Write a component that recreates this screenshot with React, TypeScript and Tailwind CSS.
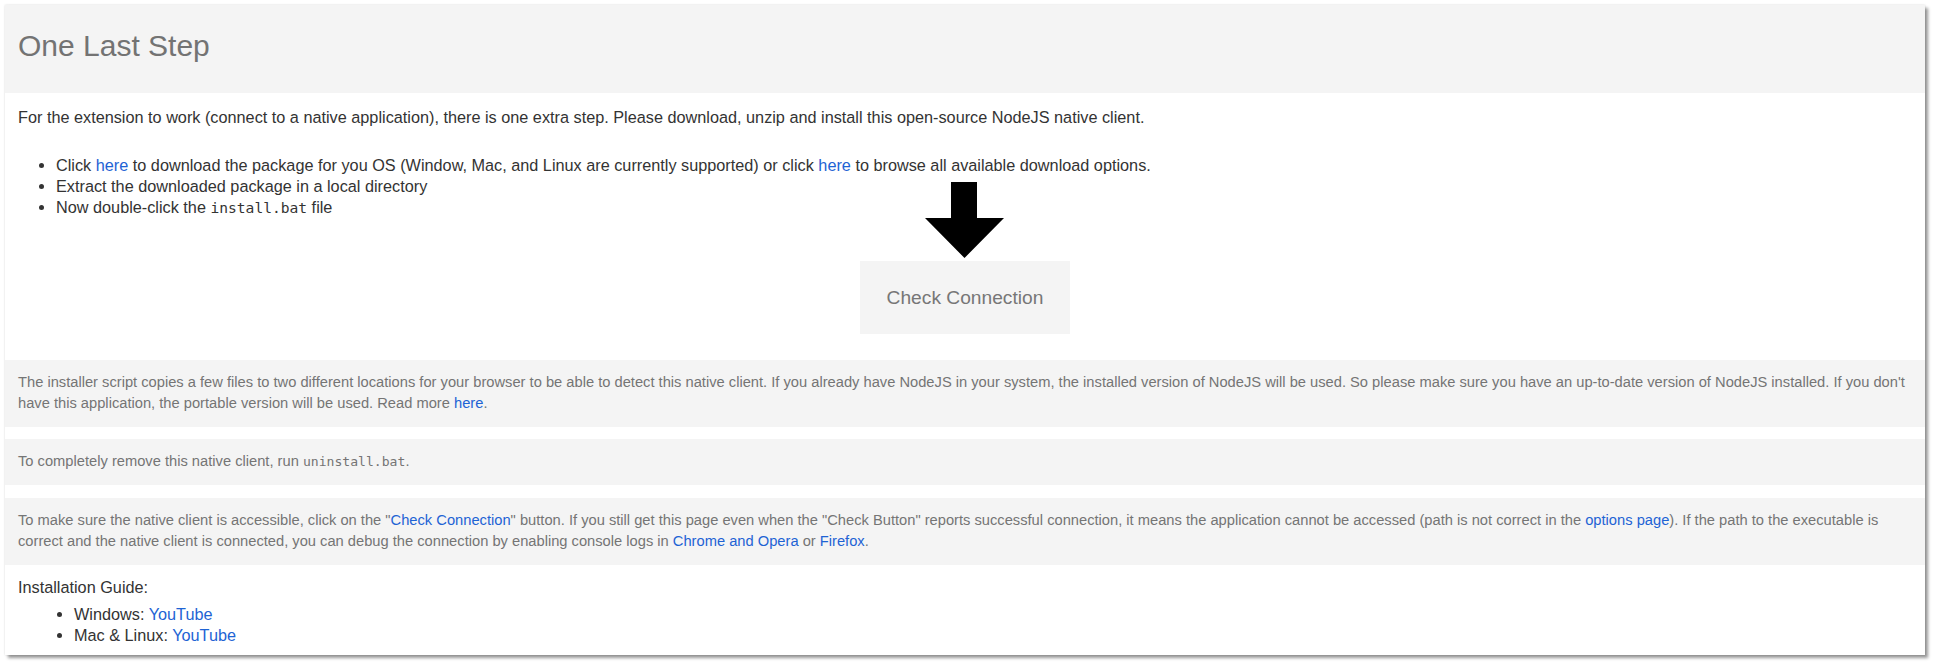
import React from 'react';

const LINK = "text-[#1e63d4] no-underline";

function Arrow() {
    return (
        <svg className="absolute left-[65px] top-[-79px]" width="80" height="77" viewBox="0 0 80 77">
            <polygon points="26,0 52,0 52,36 79,36 39.5,76 0,36 26,36" fill="#000" />
        </svg>
    );
}

export default function App() {
    return (
        <div className="min-h-[664px] bg-white pt-[5px] pl-[5px]">
            <div className="w-[1920px] bg-white font-['Liberation_Sans',Arial,sans-serif] shadow-[0_0_2px_rgba(0,0,0,0.15),3px_3px_3px_rgba(0,0,0,0.4)]">
                {/* Header */}
                <header className="h-[88px] bg-[#f4f4f4] px-[13px] pt-[24px]">
                    <h1 className="text-[30px] leading-[34px] font-normal text-[#737373]">One Last Step</h1>
                </header>

                {/* Steps */}
                <div className="px-[13px] text-[16.25px] leading-[21px] text-[#333]">
                    <p className="mt-[14px]">
                        For the extension to work (connect to a native application), there is one extra step. Please download, unzip and install this open-source NodeJS native client.
                    </p>
                    <ul className="mt-[27px] list-disc pl-[38px]">
                        <li>
                            Click <a href="#" className={LINK}>here</a> to download the package for you OS (Window, Mac, and Linux are currently supported) or click <a href="#" className={LINK}>here</a> to browse all available download options.
                        </li>
                        <li>Extract the downloaded package in a local directory</li>
                        <li>
                            Now double-click the <code className="font-['DejaVu_Sans_Mono',monospace] text-[14.6px] leading-[21px]">install.bat</code> file
                        </li>
                    </ul>
                    <div className="mt-[43px] flex justify-center">
                        <div className="relative">
                            <Arrow />
                            <button className="flex h-[73px] w-[210px] items-center justify-center bg-[#f4f4f4] text-[19.2px] text-[#777]">
                                Check Connection
                            </button>
                        </div>
                    </div>
                </div>

                {/* Notes */}
                <div className="mt-[26px] flex flex-col gap-[12px] text-[14.7px] leading-[21px] text-[#757575]">
                    <p className="bg-[#f4f4f4] px-[13px] pt-[12px] pb-[13px]">
                        The installer script copies a few files to two different locations for your browser to be able to detect this native client. If you already have NodeJS in your system, the installed version of NodeJS will be used. So please make sure you have an up-to-date version of NodeJS installed. If you don't have this application, the portable version will be used. Read more <a href="#" className={LINK}>here</a>.
                    </p>
                    <p className="bg-[#f4f4f4] px-[13px] pt-[12px] pb-[13px]">
                        To completely remove this native client, run <code className="font-['DejaVu_Sans_Mono',monospace] text-[13.1px] leading-[21px]">uninstall.bat</code>.
                    </p>
                    <p className="mt-px bg-[#f4f4f4] px-[13px] pt-[12px] pb-[13px]">
                        To make sure the native client is accessible, click on the "<a href="#" className={LINK}>Check Connection</a>" button. If you still get this page even when the "Check Button" reports successful connection, it means the application cannot be accessed (path is not correct in the <a href="#" className={LINK}>options page</a>). If the path to the executable is correct and the native client is connected, you can debug the connection by enabling console logs in <a href="#" className={LINK}>Chrome and Opera</a> or <a href="#" className={LINK}>Firefox</a>.
                    </p>
                </div>

                {/* Guide */}
                <div className="px-[13px] pt-[12px] pb-[9px] text-[16.25px] leading-[21px] text-[#333]">
                    <p>Installation Guide:</p>
                    <ul className="mt-[6px] list-disc pl-[56px]">
                        <li>Windows: <a href="#" className={LINK}>YouTube</a></li>
                        <li>Mac &amp; Linux: <a href="#" className={LINK}>YouTube</a></li>
                    </ul>
                </div>
            </div>
        </div>
    );
}
